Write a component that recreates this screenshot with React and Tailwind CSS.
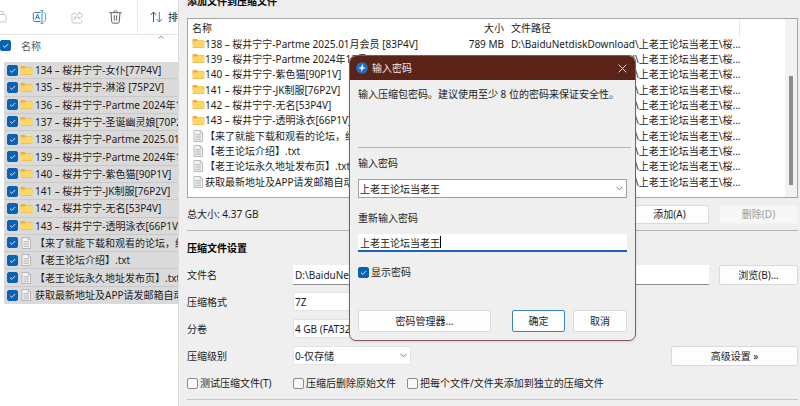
import React, { useState } from "react";

// Batch archive screen: file explorer on the left, archiver window on the right
// and the password prompt on top of it.

const FOLDERS = [
  "134 – 桜井宁宁-女仆[77P4V]",
  "135 – 桜井宁宁-淋浴 [75P2V]",
  "136 – 桜井宁宁-Partme 2024年12月",
  "137 – 桜井宁宁-圣诞幽灵娘[70P2V]",
  "138 – 桜井宁宁-Partme 2025.01月会员 [83P4V]",
  "139 – 桜井宁宁-Partme 2024年12月",
  "140 – 桜井宁宁-紫色猫[90P1V]",
  "141 – 桜井宁宁-JK制服[76P2V]",
  "142 – 桜井宁宁-无名[53P4V]",
  "143 – 桜井宁宁-透明泳衣[66P1V]",
];

const TEXTS = [
  "【来了就能下载和观看的论坛，纯净",
  "【老王论坛介绍】.txt",
  "【老王论坛永久地址发布页】.txt",
  "获取最新地址及APP请发邮箱自动回复",
];

const FILES = [
  ...FOLDERS.map((name) => ({ name, type: "folder" })),
  ...TEXTS.map((name) => ({ name, type: "text" })),
];

const ARCHIVE_FILES = FILES.slice(4);
const TARGET = "D:\\BaiduNetdiskDownload\\上老王论坛当老王\\桜...";

const BTN =
  "rounded-[2px] border border-[#dadada] bg-[#fdfdfd] text-center whitespace-nowrap text-[#1c1c1c] disabled:bg-[#f7f7f7] disabled:border-[#f2f2f2] disabled:text-[#9b9b9b]";

function FileIcon({ type }) {
  if (type === "folder") {
    return (
      <svg className="w-[13px] h-[11px] shrink-0" viewBox="0 0 13 11">
        <path d="M.5 1.8c0-.6.3-.9.9-.9h3.2l1.3 1.3h5.7c.5 0 .8.3.8.8v3H.5z" fill="#e9b13c" />
        <path d="M.5 3.6h4.2l1.2-.9h5.8c.5 0 .8.3.8.8v5.6c0 .6-.3.9-.9.9H1.4c-.6 0-.9-.3-.9-.9z" fill="#fcd667" />
        <path d="M.6 9.2h11.8c0 .5-.3.8-.8.8H1.4c-.5 0-.8-.3-.8-.8z" fill="#eebc4b" />
      </svg>
    );
  }
  return (
    <svg className="w-[13px] h-3 shrink-0" viewBox="0 0 13 12">
      <path d="M2 .5h6.2l2.3 2.3v8.7H2z" fill="#f3f3f3" stroke="#ababab" strokeWidth=".8" />
      <path d="M8.2.5v2.3h2.3M3.5 4.5H9M3.5 6.2H9M3.5 7.9H9M3.5 9.6H9" fill="none" stroke="#a8a8a8" strokeWidth=".7" />
    </svg>
  );
}

function Check({ defaultChecked = false, ...rest }) {
  return (
    <span className="relative block size-[11px] shrink-0">
      <input
        type="checkbox"
        defaultChecked={defaultChecked}
        className="peer block size-[11px] appearance-none rounded-[2px] border border-[#8b8b8b] bg-[#f8f8f8] checked:border-[#0a62b4] checked:bg-[#0a62b4]"
        {...rest}
      />
      <svg
        className="pointer-events-none absolute inset-0 hidden peer-checked:block"
        viewBox="0 0 11 11"
        fill="none"
        stroke="#d8eaf8"
        strokeWidth="1"
      >
        <path d="M3 5.7l1.8 1.7L8.2 4" />
      </svg>
    </span>
  );
}

function Chevron() {
  return (
    <svg
      className="pointer-events-none absolute right-1 top-[7px] w-[7px] h-[5px]"
      viewBox="0 0 7 5"
      fill="none"
      stroke="#777"
      strokeWidth="1"
    >
      <path d="M.5.8l3 3 3-3" />
    </svg>
  );
}

function Select({ id, options, className }) {
  return (
    <div className="relative">
      <select
        id={id}
        className={`block w-full h-[19px] appearance-none border bg-white pl-px pr-4 ${className}`}
      >
        {options.map((o) => (
          <option key={o}>{o}</option>
        ))}
      </select>
      <Chevron />
    </div>
  );
}

function Explorer() {
  return (
    <aside className="w-[178px] shrink-0 overflow-hidden bg-white">
      <div className="flex items-center h-[35px] border-b border-[#e4e4e4]">
        <button type="button" aria-label="粘贴" className="w-[7px] shrink-0">
          <svg className="w-[7px] h-4" viewBox="0 0 7 16" fill="none" stroke="#c3ccd4" strokeWidth="1">
            <path d="M0 2.5h3.2v2.8M0 5.5h5c.8 0 1.2.4 1.2 1.2v5.1c0 .8-.4 1.2-1.2 1.2H0" />
          </svg>
        </button>
        <button type="button" aria-label="重命名" className="ml-[25px] shrink-0">
          <svg className="w-[15px] h-[14px]" viewBox="0 0 15 14" fill="none" strokeWidth="1">
            <path d="M8.5 2.5H3c-1 0-1.7.7-1.7 1.7v5.6c0 1 .7 1.7 1.7 1.7h5.5" stroke="#56758e" />
            <path d="M11.5 2.5h.4c1 0 1.7.7 1.7 1.7v5.6c0 1-.7 1.7-1.7 1.7h-.4" stroke="#56a4d8" />
            <path d="M8.5.7h3M8.5 13.3h3M10 .7v12.6" stroke="#3294d8" />
            <path d="M3.3 9.5L5.5 4l2.2 5.5M4.1 7.7h2.8" stroke="#2e7fbd" />
          </svg>
        </button>
        <button type="button" aria-label="共享" className="ml-6 shrink-0">
          <svg className="w-[13px] h-[13px]" viewBox="0 0 13 13" fill="none" stroke="#b5c6d6" strokeWidth="1" strokeLinejoin="round">
            <path d="M5 2.5H2.5C1.5 2.5 1 3 1 4v6.5c0 1 .5 1.5 1.5 1.5H9c1 0 1.500-.5 1.500-1.500V9" />
            <path d="M8 1l4 3.500L8 8V6C5.800 6 4.500 6.800 3.500 8.500 3.700 5.300 5.200 3.200 8 3z" />
          </svg>
        </button>
        <button type="button" aria-label="删除" className="ml-[25px] shrink-0">
          <svg className="w-[13px] h-[14px]" viewBox="0 0 13 14" fill="none" stroke="#646464" strokeWidth="1" strokeLinecap="round">
            <path d="M.8 2.700h11.400M4.700 2.500c0-1.200.7-1.800 1.800-1.800s1.800.6 1.800 1.800M2 2.900l.8 9c.1.900.6 1.300 1.400 1.300h4.600c.8 0 1.300-.4 1.400-1.300l.8-9M5.300 5.600v4.600M7.700 5.600v4.600" />
          </svg>
        </button>
        <span className="ml-[15px] w-px h-[35px] shrink-0 bg-[#ececec]" />
        <button type="button" className="ml-3 flex items-center gap-[5px] shrink-0 whitespace-nowrap">
          <svg className="w-[13px] h-3" viewBox="0 0 13 12" fill="none" strokeWidth="1">
            <path d="M3.5 11V1M.7 4l2.800-3 2.800 3" stroke="#555" />
            <path d="M9.300 1v10M6.500 8l2.800 3 2.800-3" stroke="#2e8bd0" />
          </svg>
          排序
        </button>
      </div>

      <div className="relative flex items-center h-[27px] pb-[6px] gap-[10px] text-[#4d5b6b]">
        <Check defaultChecked aria-label="全选" />
        <span>名称</span>
        <svg className="absolute left-[158px] top-0 w-[6px] h-1" viewBox="0 0 6 4" fill="none" stroke="#777" strokeWidth=".8">
          <path d="M.4 3.500L3 1l2.600 2.500" />
        </svg>
      </div>

      <ul className="ml-1 h-[242px] grid auto-rows-fr bg-[#dadada]">
        {FILES.map((f) => (
          <li key={f.name} className="border-b border-[#c9c9c9] last:border-0">
            <label className="flex items-center h-full pl-[3px] whitespace-nowrap">
              <Check defaultChecked />
              <span className="mx-[2px]">
                <FileIcon type={f.type} />
              </span>
              {f.name}
            </label>
          </li>
        ))}
      </ul>
    </aside>
  );
}

function FileTable() {
  return (
    <div className="flex h-[180px] border border-[#a5a5a5] bg-white">
      <div className="flex-1 min-w-0 overflow-hidden">
        <table className="w-[552px] table-fixed text-left">
          <colgroup>
            <col className="w-[256px]" />
            <col className="w-[60px]" />
            <col />
          </colgroup>
          <thead>
            <tr className="h-[17px]">
              <th className="pl-1 font-normal">名称</th>
              <th className="text-right font-normal">大小</th>
              <th className="pl-[7px] font-normal border-r border-[#e6e6e6]">文件路径</th>
            </tr>
          </thead>
          <tbody className="[&>tr:nth-child(3n)]:h-4">
            {ARCHIVE_FILES.map((f) => (
              <tr key={f.name} className="h-[15px]">
                <td className="pl-1">
                  <span className="flex items-center h-[15px] whitespace-nowrap">
                    <FileIcon type={f.type} />
                    {f.name}
                  </span>
                </td>
                <td className="text-right">{f.name.startsWith("138") ? "789 MB" : ""}</td>
                <td className="pl-[7px] whitespace-nowrap">{TARGET}</td>
              </tr>
            ))}
          </tbody>
        </table>
      </div>
      <div className="w-3 shrink-0 bg-[#f2f2f2] pt-[57px]">
        <div className="mx-auto w-1 h-[109px] bg-[#8c8c8c]" />
      </div>
    </div>
  );
}

function Field({ id, label, children }) {
  return (
    <div className="flex items-center h-[27px]">
      <label htmlFor={id} className="w-[106px] shrink-0">
        {label}
      </label>
      {children}
    </div>
  );
}

function Archiver() {
  return (
    <main className="flex-1 min-w-0 overflow-hidden border-l border-[#dcdcdc] bg-[#efefef] pl-2 pr-[2px]">
      <h1 className="h-[18px] -mt-[6px] mb-[6px] font-bold text-black leading-[14px]">添加文件到压缩文件</h1>
      <FileTable />

      <div className="flex items-center h-8 gap-[10px]">
        <span className="flex-1">总大小: 4.37 GB</span>
        <button type="button" className={`${BTN} w-[79px] h-[19px]`}>添加(A)</button>
        <button type="button" disabled className={`${BTN} w-[79px] h-[19px]`}>删除(D)</button>
      </div>

      <section className="border-t border-[#b4b4b4]">
        <h2 className="h-[30px] pt-[10px] font-bold text-black">压缩文件设置</h2>
        <Field id="filename" label="文件名">
          <input
            id="filename"
            defaultValue="D:\BaiduNetdiskDownload\上老王论坛当老王"
            className="flex-1 min-w-0 h-5 px-[2px] border-b border-[#8f8f8f] bg-white"
          />
          <button type="button" className={`${BTN} ml-[10px] w-[79px] h-5`}>浏览(B)...</button>
        </Field>
        <Field id="format" label="压缩格式">
          <div className="w-[118px]">
            <Select id="format" options={["7Z", "ZIP"]} className="border-[#e2e2e2]" />
          </div>
        </Field>
        <Field id="volume" label="分卷">
          <div className="w-[118px]">
            <Select id="volume" options={["4 GB (FAT32)"]} className="border-[#e2e2e2]" />
          </div>
        </Field>
        <Field id="level" label="压缩级别">
          <div className="w-[118px]">
            <Select id="level" options={["0-仅存储", "5-标准"]} className="border-[#e2e2e2]" />
          </div>
          <button type="button" className={`${BTN} ml-auto w-[127px] h-5`}>高级设置 »</button>
        </Field>
        <div className="flex items-center h-[31px] border-b border-[#c6c6c6] pb-[2px] whitespace-nowrap">
          <label className="flex items-center gap-[2px] w-[106px]">
            <Check />
            测试压缩文件(T)
          </label>
          <label className="flex items-center gap-[2px] w-[114px]">
            <Check />
            压缩后删除原始文件
          </label>
          <label className="flex items-center gap-[2px]">
            <Check />
            把每个文件/文件夹添加到独立的压缩文件
          </label>
        </div>
      </section>
    </main>
  );
}

function PasswordDialog() {
  const [confirm, setConfirm] = useState("上老王论坛当老王");

  return (
    <div
      role="dialog"
      aria-label="输入密码"
      className="absolute left-[349px] top-[55px] w-[287px] overflow-hidden rounded-[7px] border border-[#86595a] bg-[#efefef] shadow-sm"
    >
      <header className="flex items-center h-6 pl-[6px] pr-2 bg-[#5c2318] text-[#f2e9e7]">
        <svg className="w-3 h-3 mr-1" viewBox="0 0 12 12">
          <circle cx="6" cy="6" r="5.800" fill="#1673c9" />
          <path d="M6.800 1.800L5 5.200 2.300 6l2.900 1 .200 3L7 7l2.800-1-2.600-.8z" fill="#fff" />
        </svg>
        <span className="flex-1">输入密码</span>
        <button type="button" aria-label="关闭">
          <svg className="w-[9px] h-[9px]" viewBox="0 0 9 9" stroke="#e3d3d0" strokeWidth="1">
            <path d="M.6.6l7.800 7.800M8.400.6L.6 8.400" />
          </svg>
        </button>
      </header>

      <div className="px-2 pb-2">
        <p className="h-[68px] pt-[7px] -mr-1 border-b border-[#b4b4b4] whitespace-nowrap">
          输入压缩包密码。建议使用至少 8 位的密码来保证安全性。
        </p>

        <label htmlFor="pwd" className="block h-[31px] pt-2">输入密码</label>
        <Select id="pwd" options={["上老王论坛当老王"]} className="border-[#a0a0a0]" />

        <label htmlFor="pwd2" className="block h-9 pt-[13px]">重新输入密码</label>
        <div className="relative">
          <input
            id="pwd2"
            value={confirm}
            onChange={(e) => setConfirm(e.target.value)}
            className="block w-full h-[18px] px-[2px] border-b-2 border-[#1a66b0] bg-white outline-none"
          />
          <span className="absolute left-[82px] top-[2px] w-px h-3 bg-black" />
        </div>

        <label className="flex items-center gap-[2px] mt-[13px]">
          <Check defaultChecked />
          显示密码
        </label>

        <div className="flex mt-[31px]">
          <button type="button" className={`${BTN} flex-1 h-[22px] mr-[21px]`}>密码管理器...</button>
          <button type="button" className="w-[53px] h-[22px] mr-2 rounded-[2px] border border-[#3d84bd] bg-[#fdfdfd]">
            确定
          </button>
          <button type="button" className={`${BTN} w-[54px] h-[22px]`}>取消</button>
        </div>
      </div>
    </div>
  );
}

export default function App() {
  return (
    <div className="relative flex min-h-screen overflow-hidden bg-white font-['Noto_Sans','Noto_Sans_CJK_SC',sans-serif] text-[10px] leading-[14px] text-[#1c1c1c]">
      <Explorer />
      <Archiver />
      <PasswordDialog />
    </div>
  );
}
